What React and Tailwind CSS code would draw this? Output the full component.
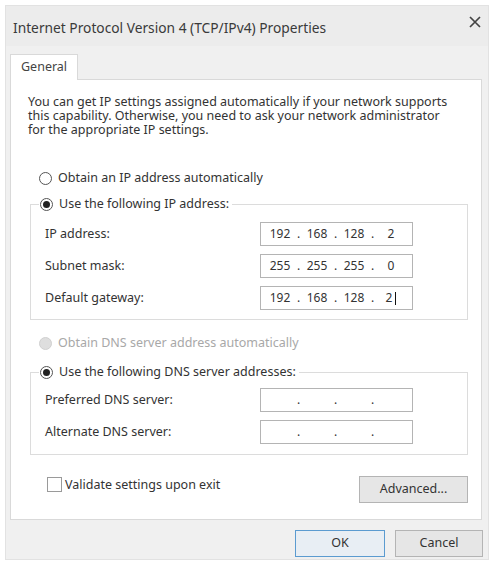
import * as React from 'react';

const Radio = ({ checked, disabled }) => (
  <span
    className={`w-[13px] h-[13px] shrink-0 rounded-full border flex items-center justify-center ${
      disabled ? 'border-[#d0d0d0] bg-[#dedede]' : 'border-[#555] bg-white'
    }`}
  >
    {checked && <span className="w-[7px] h-[7px] rounded-full bg-[#222]" />}
  </span>
);

const IpBox = ({ parts = ['', '', '', ''], caret = false }) => (
  <div className="w-[153px] h-[24px] border border-[#b4b4b4] bg-white flex items-center pl-[3px] text-[12px] text-[#333]">
    {parts.map((p, i) => (
      <React.Fragment key={i}>
        <span className="w-[32px] text-center">
          {p}
          {caret && i === 3 && <span className="inline-block w-px h-[13px] bg-[#111] align-middle ml-[3px]" />}
        </span>
        {i < 3 && <span className="w-[5px] text-center">.</span>}
      </React.Fragment>
    ))}
  </div>
);

const Row = ({ label, children }) => (
  <div className="flex items-center pl-[14px]">
    <span className="w-[215px]">{label}</span>
    {children}
  </div>
);

export default function App() {
  return (
    <div className="w-[493px] h-[564px] bg-white pt-[5px] pl-[5px] pr-[4px] pb-[4px] font-['Noto_Sans',sans-serif] text-[12.5px] text-[#333]">
      <div className="h-full flex flex-col bg-[#f0f0f0] border border-[#e2e2e2]">
        {/* title bar */}
        <div className="h-[40px] flex justify-between pl-[7px] pr-[7px] bg-[#ececec]">
          <span className="mt-[14px] leading-[16px] text-[13.75px] text-[#3a3a3a]">
            Internet Protocol Version 4 (TCP/IPv4) Properties
          </span>
          <svg className="mt-[10px]" width="12" height="12" viewBox="0 0 12 12">
            <path d="M1 1 L11 11 M11 1 L1 11" stroke="#444" strokeWidth="1.7" fill="none" />
          </svg>
        </div>

        {/* tabs */}
        <div className="mt-[8px] ml-[4px] mr-[6px] flex">
          <div className="relative z-10 -mb-px w-[68px] h-[26px] border border-b-0 border-[#d9d9d9] bg-white pl-[10px] leading-[24px] text-[#444]">
            General
          </div>
        </div>

        {/* tab page */}
        <div className="ml-[4px] mr-[6px] border border-[#d9d9d9] bg-white pl-[19px] pr-[13px] pt-[15px] pb-[16px]">
          <p className="-ml-[2px] leading-[14px] whitespace-nowrap">
            You can get IP settings assigned automatically if your network supports
            <br />
            this capability. Otherwise, you need to ask your network administrator
            <br />
            for the appropriate IP settings.
          </p>

          <div className="mt-[32px] ml-[9px] h-[18px] flex items-center gap-[6px]">
            <Radio />
            <span>Obtain an IP address automatically</span>
          </div>

          <fieldset className="mt-[8px] border border-[#dcdcdc] pt-[9px] pb-[9px]">
            <legend className="ml-[8px] pl-px pr-[3px] h-[18px] flex items-center gap-[6px]">
              <Radio checked />
              <span>Use the following IP address:</span>
            </legend>
            <div className="flex flex-col gap-[8px]">
              <Row label="IP address:">
                <IpBox parts={['192', '168', '128', '2']} />
              </Row>
              <Row label="Subnet mask:">
                <IpBox parts={['255', '255', '255', '0']} />
              </Row>
              <Row label="Default gateway:">
                <IpBox parts={['192', '168', '128', '2']} caret />
              </Row>
            </div>
          </fieldset>

          <div className="mt-[14px] ml-[9px] h-[18px] flex items-center gap-[6px] text-[#a8a8a8]">
            <Radio disabled />
            <span>Obtain DNS server address automatically</span>
          </div>

          <fieldset className="mt-[11px] border border-[#dcdcdc] pt-[7px] pb-[10px]">
            <legend className="ml-[8px] pl-px pr-[3px] h-[18px] flex items-center gap-[6px]">
              <Radio checked />
              <span>Use the following DNS server addresses:</span>
            </legend>
            <div className="flex flex-col gap-[8px]">
              <Row label="Preferred DNS server:">
                <IpBox />
              </Row>
              <Row label="Alternate DNS server:">
                <IpBox />
              </Row>
            </div>
          </fieldset>

          <div className="mt-[21px] flex items-start">
            <div className="ml-[17px] mt-[1px] flex items-center gap-[3px]">
              <span className="w-[15px] h-[15px] border border-[#9a9a9a] bg-white" />
              <span className="leading-[15px]">Validate settings upon exit</span>
            </div>
            <button className="ml-auto w-[109px] h-[27px] border border-[#b4b4b4] bg-[#e6e6e6] text-[#333]">
              Advanced...
            </button>
          </div>
        </div>

        {/* footer */}
        <div className="mt-[10px] mr-[5px] flex justify-end gap-[10px]">
          <button className="w-[90px] h-[27px] border border-[#5b9bd0] bg-[#e8eef4] text-[#333]">OK</button>
          <button className="w-[88px] h-[27px] border border-[#b4b4b4] bg-[#e6e6e6] text-[#333]">Cancel</button>
        </div>
      </div>
    </div>
  );
}
